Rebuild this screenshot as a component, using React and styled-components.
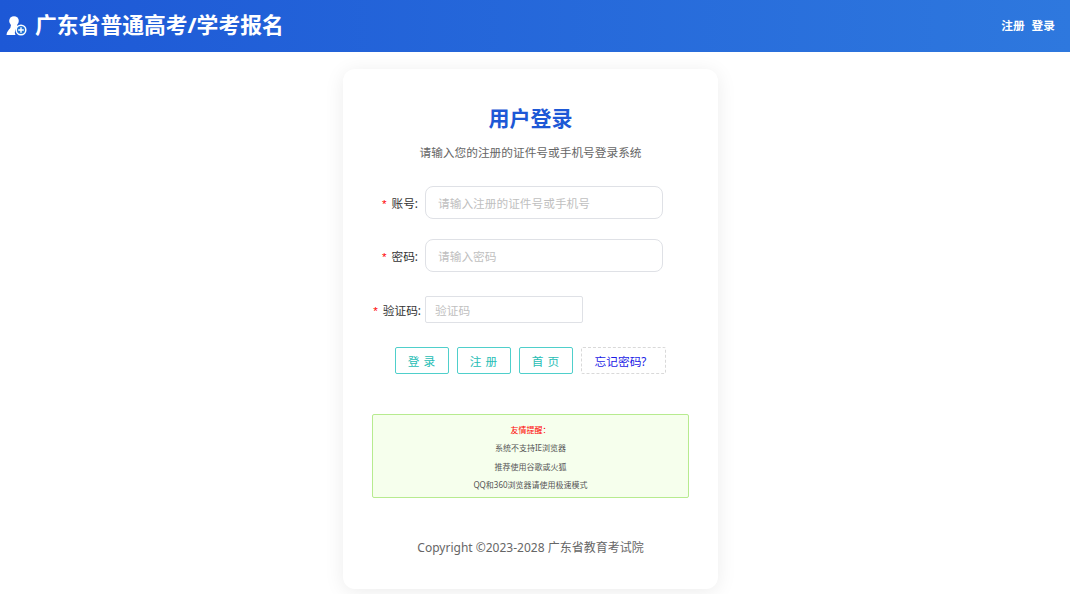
import styled, { createGlobalStyle } from "styled-components"

const fontStack = `"Noto Sans", "Noto Sans CJK SC", sans-serif`

const GlobalStyle = createGlobalStyle`
  html, body {
    margin: 0;
    padding: 0;
    background: #fff;
    overflow: hidden;
  }
  * {
    box-sizing: border-box;
  }
  body {
    font-family: ${fontStack};
  }
  input::placeholder {
    color: #bfbfbf;
    opacity: 1;
  }
`

const Page = styled.div`
  width: 1070px;
  height: 594px;
  overflow: hidden;
`

const Header = styled.header`
  height: 52px;
  display: flex;
  align-items: center;
  justify-content: space-between;
  padding: 0 15px 0 6px;
  background: linear-gradient(90deg, #1d58d6, #2e78de);
  color: #fff;
`

const Brand = styled.div`
  display: flex;
  align-items: center;
  gap: 8px;
`

const IconSvg = styled.svg`
  margin-bottom: 1px;
`

const Title = styled.h1`
  margin: 0 0 2px;
  font-size: 21.8px;
  font-weight: 700;
  line-height: 30px;
`

const HeaderNav = styled.nav`
  display: flex;
  gap: 7px;
  margin-bottom: 3px;
  font-size: 11.7px;
  font-weight: 700;
`

const Card = styled.main`
  width: 375px;
  height: 520px;
  margin: 17px 0 0 343px;
  padding: 35px 29px 0;
  background: #fff;
  border-radius: 12px;
  box-shadow: 0 3px 20px rgba(0, 0, 0, 0.08);
`

const CardTitle = styled.h2`
  margin: 0;
  text-align: center;
  font-size: 21px;
  line-height: 28px;
  font-weight: 700;
  color: #1d58d6;
`

const Subtitle = styled.p`
  margin: 11px 0 0;
  text-align: center;
  font-size: 11.7px;
  line-height: 18px;
  color: #666;
`

const Form = styled.form`
  margin-top: 25px;
`

const Row = styled.div`
  display: flex;
  align-items: center;
  height: 33px;
  margin-bottom: ${(p) => p.$gap}px;
`

const Label = styled.label`
  width: 53px;
  padding-right: ${(p) => p.$pad}px;
  text-align: right;
  font-size: 11.7px;
  white-space: nowrap;
  color: #333;
  &::before {
    content: "*";
    margin-right: 5px;
    font-family: "Liberation Sans", sans-serif;
    color: #f00;
  }
`

const TextInput = styled.input`
  width: 238px;
  height: 33px;
  padding: 0 12px;
  font: 11.7px ${fontStack};
  background: #fff;
  border: 1px solid #dfe1e6;
  border-radius: 8px;
  outline: none;
`

const CodeInput = styled(TextInput)`
  width: 158px;
  height: 27px;
  padding: 0 9px;
  border-radius: 2px;
`

const Buttons = styled.div`
  display: flex;
  gap: 8px;
  margin: 21px 0 0 23px;
`

const OutlineButton = styled.button`
  width: 54px;
  height: 27px;
  padding: 0 0 0 3px;
  font: 11.7px ${fontStack};
  letter-spacing: 4px;
  color: #26bdb5;
  background: #fff;
  border: 1px solid #4fcfcb;
  border-radius: 2px;
`

const ForgotButton = styled.button`
  width: 85px;
  height: 27px;
  padding: 0 6px 0 0;
  font: 11.7px ${fontStack};
  color: #1a1ae6;
  background: #fff;
  border: 1px dashed #d9d9d9;
  border-radius: 2px;
`

const Notice = styled.section`
  margin-top: 40px;
  width: 317px;
  height: 84px;
  padding-top: 6px;
  background: #f6ffed;
  border: 1px solid #b7eb8f;
  border-radius: 2px;
  text-align: center;
  font-size: 8px;
  line-height: 18.3px;
  color: #555;
`

const NoticeTitle = styled.div`
  color: #f00;
`

const Copyright = styled.footer`
  margin-top: 41px;
  text-align: center;
  font-size: 12px;
  line-height: 18px;
  color: #666;
`

const BrandIcon = () => (
  <IconSvg width="21" height="20" viewBox="0 0 21 20">
    <circle cx="8" cy="5" r="4.8" fill="#fff" />
    <path d="M5 9h6l1 2a6 6 0 0 0-2.5 8H0.5c0-3 2.5-5.5 3.8-7z" fill="#fff" />
    <circle cx="15" cy="14" r="4.8" fill="#2274d8" stroke="#fff" strokeWidth="1.5" />
    <path d="M15 11.2v5.6M12.2 14h5.6" stroke="#fff" strokeWidth="1.4" />
  </IconSvg>
)

export default function App() {
  return (
    <Page>
      <GlobalStyle />
      <Header>
        <Brand>
          <BrandIcon />
          <Title>广东省普通高考/学考报名</Title>
        </Brand>
        <HeaderNav>
          <span>注册</span>
          <span>登录</span>
        </HeaderNav>
      </Header>
      <Card>
        <CardTitle>用户登录</CardTitle>
        <Subtitle>请输入您的注册的证件号或手机号登录系统</Subtitle>
        <Form>
          <Row $gap={20}>
            <Label $pad={7}>账号:</Label>
            <TextInput placeholder="请输入注册的证件号或手机号" />
          </Row>
          <Row $gap={21}>
            <Label $pad={7}>密码:</Label>
            <TextInput placeholder="请输入密码" />
          </Row>
          <Row $gap={0}>
            <Label $pad={4}>验证码:</Label>
            <CodeInput placeholder="验证码" />
          </Row>
          <Buttons>
            <OutlineButton type="button">登录</OutlineButton>
            <OutlineButton type="button">注册</OutlineButton>
            <OutlineButton type="button">首页</OutlineButton>
            <ForgotButton type="button">忘记密码?</ForgotButton>
          </Buttons>
        </Form>
        <Notice>
          <NoticeTitle>友情提醒：</NoticeTitle>
          <div>系统不支持IE浏览器</div>
          <div>推荐使用谷歌或火狐</div>
          <div>QQ和360浏览器请使用极速模式</div>
        </Notice>
        <Copyright>Copyright ©2023-2028 广东省教育考试院</Copyright>
      </Card>
    </Page>
  )
}
